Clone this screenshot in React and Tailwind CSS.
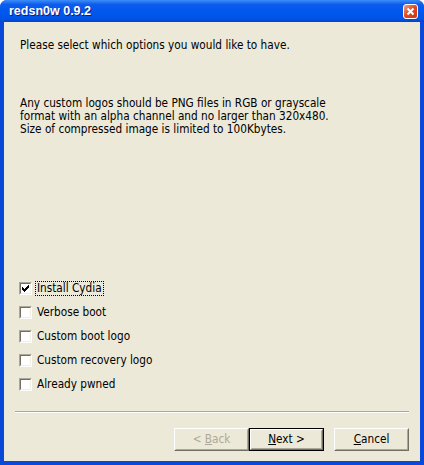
const font = { fontFamily: '"DejaVu Sans Condensed", "Liberation Sans", sans-serif' };

function Checkbox({ checked }) {
  return (
    <span className="w-[13px] h-[13px] shrink-0 border border-t-[#ACA899] border-l-[#ACA899] border-r-white border-b-white">
      <span className="flex items-center justify-center w-full h-full bg-white border border-t-[#716F64] border-l-[#716F64] border-r-[#F1EFE2] border-b-[#F1EFE2]">
        {checked && (
          <svg width="7" height="7" viewBox="0 0 7 7">
            <path d="M0 2h1v1h1v1h1V3h1V2h1V1h1V0h1v3h-1v1h-1v1h-1v1h-1v1h-1V6H1V5H0z" fill="#000" />
          </svg>
        )}
      </span>
    </span>
  );
}

function Option({ label, checked, focused }) {
  return (
    <div className="flex items-center h-[13px] gap-[4px]">
      <Checkbox checked={checked} />
      <span className={`px-[1px] leading-[13px] ${focused ? 'outline-1 outline-dotted outline-black' : ''}`}>{label}</span>
    </div>
  );
}

function Button({ children, disabled, isDefault }) {
  const inner = (
    <div className="w-full h-full border border-t-white border-l-white border-r-[#716F64] border-b-[#716F64]">
      <div className={`flex items-center justify-center w-full h-full border border-t-transparent border-l-transparent border-r-[#ACA899] border-b-[#ACA899] ${disabled ? 'text-[#ACA899]' : 'text-black'}`}>
        <span className="whitespace-pre">{children}</span>
      </div>
    </div>
  );
  return (
    <div className={`w-[75px] h-[23px] ${isDefault ? 'border border-black' : ''}`}>{inner}</div>
  );
}

export default function App() {
  return (
    <div className="w-[424px] h-[465px] bg-[#0A48DA] rounded-t-[7px] flex flex-col overflow-hidden text-[11.7px] text-black" style={font}>
      <div className="h-[22px] shrink-0 flex items-center justify-between pl-[9px] pr-[6px] bg-[linear-gradient(#3D8EF9_0%,#0D5CEC_20%,#0058EE_55%,#0052E4_85%,#0044CC_100%)]">
        <span className="text-white font-bold text-[12.5px] [text-shadow:1px_1px_#0A1E80]" style={{ fontFamily: '"Liberation Sans", sans-serif' }}>redsn0w 0.9.2</span>
        <div className="w-[15px] h-[15px] rounded-[3px] border border-white bg-[linear-gradient(135deg,#F0A08A,#E2481F_50%,#C83A12)] flex items-center justify-center">
          <svg width="9" height="9" viewBox="0 0 9 9">
            <path d="M1.5 1.5l6 6M7.5 1.5l-6 6" stroke="#fff" strokeWidth="2" />
          </svg>
        </div>
      </div>
      <div className="flex-1 mx-[4px] mb-[4px] bg-[#ECE9D8] flex flex-col">
        <p className="mt-[17px] ml-[16px] leading-[13px]">Please select which options you would like to have.</p>
        <p className="mt-[45px] ml-[16px] leading-[13px]">
          Any custom logos should be PNG files in RGB or grayscale<br />
          format with an alpha channel and no larger than 320x480.<br />
          Size of compressed image is limited to 100Kbytes.
        </p>
        <div className="mt-[146px] ml-[15px] flex flex-col gap-[11px]">
          <Option label="Install Cydia" checked focused />
          <Option label="Verbose boot" />
          <Option label="Custom boot logo" />
          <Option label="Custom recovery logo" />
          <Option label="Already pwned" />
        </div>
        <div className="mt-[20px] mx-[11px] h-[2px] border-t border-t-[#ACA899] border-b border-b-white" />
        <div className="mt-[15px] flex justify-end pr-[11px]">
          <Button disabled>&lt; <u>B</u>ack</Button>
          <Button isDefault><u>N</u>ext &gt;</Button>
          <div className="w-[10px]" />
          <Button><u>C</u>ancel</Button>
        </div>
      </div>
    </div>
  );
}
